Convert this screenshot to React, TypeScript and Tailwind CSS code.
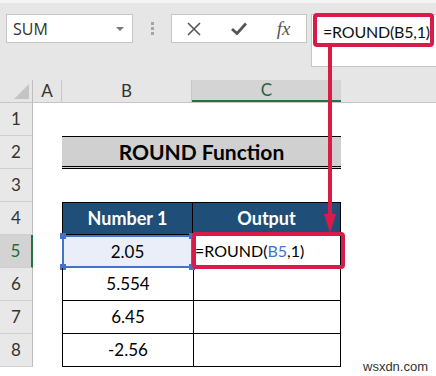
import React from "react";

const rows = [1, 2, 3, 4, 5, 6, 7, 8];
const vals: Record<number, string> = { 5: "2.05", 6: "5.554", 7: "6.45", 8: "-2.56" };

function RowHeader({ n }: { n: number }) {
  const sel = n === 5;
  return (
    <div
      className={`w-[33px] shrink-0 flex items-center justify-center text-[17px] border-b border-[#d0d0d0] ${
        sel ? "bg-[#d3d3d3] text-[#1e6b3f] border-r-2 border-r-[#217346]" : "bg-[#e8e8e8] text-[#333] border-r border-r-[#bdbdbd]"
      }`}
    >
      {n}
    </div>
  );
}

export default function App() {
  return (
    <div className="relative w-[436px] h-[376px] overflow-hidden bg-white font-['Lato','Liberation_Sans',sans-serif]">
      {/* top bar */}
      <div className="h-[80px] bg-[#e6e6e6] border-t-[3px] border-[#f4f4f4] flex items-start pt-[11px]">
        <div className="ml-[6px] w-[127px] h-[29px] bg-white border border-[#c6c6c6] flex items-center justify-between pl-[6px] pr-[8px]">
          <span className="text-[16px] text-[#333] font-['Open_Sans',sans-serif]">SUM</span>
          <span className="w-0 h-0 border-l-[4px] border-r-[4px] border-t-[4px] border-l-transparent border-r-transparent border-t-[#777]" />
        </div>
        <div className="w-[38px] h-[29px] flex flex-col items-center justify-center gap-[2px]">
          <span className="w-[3px] h-[3px] bg-[#a5a5a5]" />
          <span className="w-[3px] h-[3px] bg-[#a5a5a5]" />
          <span className="w-[3px] h-[3px] bg-[#a5a5a5]" />
        </div>
        <div className="w-[136px] h-[29px] bg-white border border-[#c6c6c6] flex items-center">
          <div className="w-[44px] flex justify-center">
            <svg width="14" height="14" viewBox="0 0 14 14">
              <path d="M1 1 L13 13 M13 1 L1 13" stroke="#555" strokeWidth="1.6" fill="none" />
            </svg>
          </div>
          <div className="w-[45px] flex justify-center">
            <svg width="16" height="13" viewBox="0 0 16 13">
              <path d="M1 7 L6 11.5 L15 1.5" stroke="#555" strokeWidth="2.8" fill="none" />
            </svg>
          </div>
          <div className="w-[45px] flex justify-center">
            <span className="font-['Liberation_Serif',serif] italic text-[19px] text-[#555] leading-none">fx</span>
          </div>
        </div>
        <div className="ml-[4px] flex-1 h-[53px] bg-white border border-r-0 border-[#c6c6c6] pl-[11px] pt-[5px] whitespace-nowrap">
          <span className="text-[16px] text-[#111] tracking-[-0.2px]">=ROUND(B5,1)</span>
        </div>
      </div>

      {/* column headers */}
      <div className="h-[23px] flex bg-[#e6e6e6] border-b border-[#c6c6c6]">
        <div className="w-[33px] shrink-0 relative border-r border-[#bdbdbd]">
          <div className="absolute right-[3px] bottom-[3px] w-0 h-0 border-l-[15px] border-l-transparent" style={{ borderBottom: "15px solid #c4c4c4" }} />
        </div>
        <div className="w-[29px] shrink-0 flex items-center justify-center text-[17px] text-[#333] border-r border-[#c6c6c6]">A</div>
        <div className="w-[130px] shrink-0 flex items-center justify-center text-[17px] text-[#333] border-r border-[#c6c6c6]">B</div>
        <div className="w-[149px] shrink-0 flex items-center justify-center text-[17px] text-[#2a5f45] bg-[#d4d4d4] border-b-2 border-[#217346]">C</div>
        <div className="flex-1" />
      </div>

      {/* rows */}
      {rows.map((n) => (
        <div key={n} className="h-[33px] flex">
          <RowHeader n={n} />
          <div className="w-[29px] shrink-0" />
          {n === 2 ? (
            <div className="w-[279px] shrink-0 bg-[#d0d0d0] border-t border-black border-b-[3px] border-b-black border-double flex items-center justify-center text-[21px] font-bold text-black">
              ROUND Function
            </div>
          ) : n === 4 ? (
            <>
              <div className="w-[131px] shrink-0 bg-[#1f4e78] border border-black flex items-center justify-center text-[18px] font-bold text-white">Number 1</div>
              <div className="w-[148px] shrink-0 bg-[#1f4e78] border-y border-r border-black flex items-center justify-center text-[18px] font-bold text-white">Output</div>
            </>
          ) : n >= 5 ? (
            <>
              <div
                className={`w-[131px] shrink-0 relative flex items-center justify-center text-[17px] text-black ${
                  n === 5 ? "bg-[#e9eef8] border-2 border-[#4472c4]" : "border-l border-b border-black"
                }`}
              >
                {vals[n]}
                {n === 5 && (
                  <>
                    <span className="absolute -left-[4px] -top-[4px] w-[6px] h-[6px] bg-[#4472c4]" />
                    <span className="absolute -left-[4px] -bottom-[4px] w-[6px] h-[6px] bg-[#4472c4]" />
                    <span className="absolute -right-[4px] -top-[4px] w-[6px] h-[6px] bg-[#4472c4]" />
                    <span className="absolute -right-[4px] -bottom-[4px] w-[6px] h-[6px] bg-[#4472c4]" />
                  </>
                )}
              </div>
              <div className="w-[148px] shrink-0 border-l border-r border-b border-black flex items-center text-[16px] text-black pl-[1px]">
                {n === 5 && (
                  <span>
                    =ROUND(<span className="text-[#3f74c7]">B5</span>,1)
                  </span>
                )}
              </div>
            </>
          ) : (
            <div className="w-[279px] shrink-0" />
          )}
          <div className="flex-1" />
        </div>
      ))}

      {/* annotations */}
      <div className="absolute left-[313px] top-[13px] w-[121px] h-[34px] border-[4px] border-[#d81b48] rounded-[4px]" />
      <div className="absolute left-[328px] top-[47px] w-[4px] h-[170px] bg-[#d81b48]" />
      <div className="absolute left-[324px] top-[214px] w-0 h-0 border-l-[6px] border-r-[6px] border-t-[19px] border-l-transparent border-r-transparent border-t-[#d81b48]" />
      <div className="absolute left-[192px] top-[232px] w-[153px] h-[37px] border-[4px] border-[#d81b48] rounded-[4px]" />

      <div className="absolute left-[363px] top-[357px] text-[13px] text-[#333] font-['Liberation_Sans',sans-serif]">wsxdn.com</div>
    </div>
  );
}
